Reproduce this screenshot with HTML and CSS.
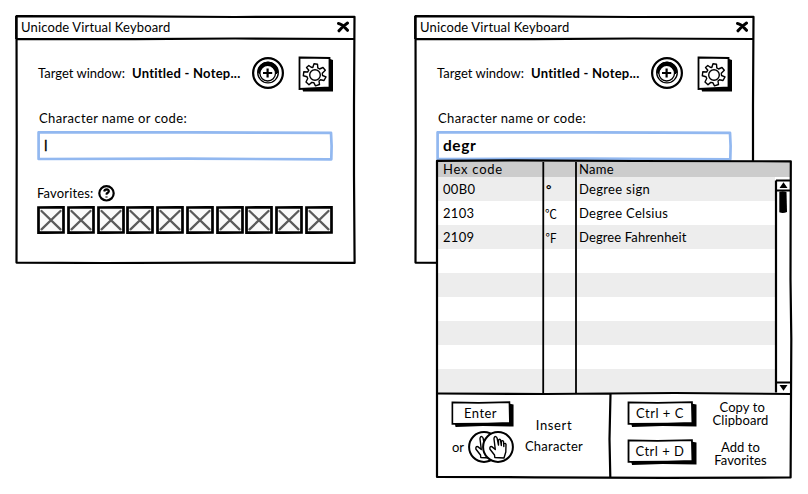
FILE: index.html
```
<!DOCTYPE html>
<html lang="en">
<head>
<meta charset="utf-8">
<title>Unicode Virtual Keyboard</title>
<link rel="stylesheet" href="styles.css">
</head>
<body>
<svg class="defs" aria-hidden="true">
  <symbol id="frame" viewBox="0 0 341 249">
    <path class="ink" d="M1.500 1.200L120 1.300 220 2 339.500 1.800 339 90 339 160 339.600 247.900 200 247.600 90 248 1.500 247.600 1.700 120Z M1.500 23.800L120 24.200 220 23.500 339 24"/>
    <path class="ink" d="M1.200 1V24"/>
  </symbol>
  <symbol id="close" viewBox="0 0 12 12">
    <path class="fat" d="M1.500 2.500Q5 3 10.500 9.300M10.500 2Q6 5 2 9.800"/>
  </symbol>
  <symbol id="target" viewBox="0 0 32 32">
    <circle class="ink" cx="16" cy="16" r="14.900"/>
    <circle cx="16" cy="15.600" r="10.300" fill="#fff" stroke="#000" stroke-width="1.300"/>
    <path d="M6 15A10 10 0 0 1 26 15L24 17A8.500 8.500 0 0 0 7.500 17Z" stroke="#000"/>
    <circle cx="15.700" cy="16.200" r="7.800" fill="#fff" stroke="#000" stroke-width="1.300"/>
    <path class="ink" d="M15.600 11.500V20.500M11 16H20.200"/>
  </symbol>
  <symbol id="gear" viewBox="0 0 36 36">
    <path d="M4 31H32V3L35 4V35.500H5Z"/>
    <path d="M1.500 1.500L31.500 2 31.500 31.500 1.500 33Z" fill="#fff" stroke="#000" stroke-width="1.800"/>
    <path class="line" d="M13.200 11.300L14.800 11.500 16 7.800 19.500 8.300 19.800 11.900 21.500 13 25 11.500 27.300 14.300 24.300 17.300 24.500 19.500 28 20.800 26 24.500 22.500 23.800 21 25 21.500 28.500 17.500 29.800 15.800 26.700 13.800 26.400 11 28.800 8 26 9.700 22.500 9 20.800 5.300 19.800 5.800 15.800 9.600 16 10.800 14.200 8.500 11.500 10.800 9.500Z"/>
    <circle class="line" cx="17" cy="19" r="5.300"/>
  </symbol>
  <symbol id="help" viewBox="0 0 17 17">
    <circle class="ink" cx="8.500" cy="8.300" r="7.200"/>
    <path class="ink" d="M6.200 6.500Q6.500 4.400 8.700 4.400Q11 4.600 10.800 6.400Q10.500 7.500 8.700 8.500V9.800M8.500 11.400V12.600"/>
  </symbol>
  <symbol id="slot" viewBox="0 0 28 28">
    <path d="M1.500 1.500L26.500 1.300 26.500 26.500 1.500 26.700Z" fill="#fafafa" stroke="#000" stroke-width="2.700"/>
    <path d="M4.500 5L23.500 23.300M23.500 5L4.500 23.300" fill="none" stroke="#5b5b5b" stroke-width="2.300" stroke-linecap="round"/>
  </symbol>
  <symbol id="field" viewBox="0 0 296 30">
    <path d="M1.600 1.300L150 1.300 294 1.900 294.600 15 294.300 28.300 150 27.700 1.600 28Z" fill="#fff" stroke="#92b8f0" stroke-width="2.700" stroke-linejoin="round"/>
  </symbol>
  <symbol id="key" viewBox="0 0 69 26" preserveAspectRatio="none">
    <path d="M4 22L63 22 63 2.500 68.500 3.500V25.500L35 25 5 26Z"/>
    <path d="M1.500 1.300L30 1.900 64 1.200 64.500 22 40 22.600 1.500 22.800Z" fill="#fff" stroke="#000" stroke-width="1.800"/>
  </symbol>
  <symbol id="hand" viewBox="0 0 32 32">
    <circle cx="16" cy="16" r="14.900" fill="#fff" stroke="#000" stroke-width="2"/>
    <path class="line" d="M12.800 26.500L12.500 24 8 18.300Q7.200 15.300 9.800 15.600L13.300 18.500 12 8Q12 5.300 13.800 5.600Q15 6 15.300 8L16.500 14V9.500Q17 7.500 18.500 8.800L19.300 14.500V10.300Q20.300 8.800 21.500 10.500L21.800 15.500V12.800Q23.500 11.600 24 13.500L23.800 21 22 27Z"/>
  </symbol>
</svg>

<main class="stage">
  <section class="window">
    <svg class="frame"><use href="#frame"/></svg>
    <header class="titlebar"><span class="title">Unicode Virtual Keyboard</span><svg class="close"><use href="#close"/></svg></header>
    <div class="body">
      <div class="target-row">
        <span class="target-label">Target window:</span><b class="target-name">Untitled - Notep...</b>
        <svg class="target"><use href="#target"/></svg><svg class="gear"><use href="#gear"/></svg>
      </div>
      <div class="name-label">Character name or code:</div>
      <div class="field"><svg class="field-box"><use href="#field"/></svg><span class="caret">l</span></div>
      <div class="fav-row"><span class="fav-label">Favorites:</span><svg class="help"><use href="#help"/></svg></div>
      <div class="slots">
        <svg><use href="#slot"/></svg><svg><use href="#slot"/></svg><svg><use href="#slot"/></svg><svg><use href="#slot"/></svg><svg><use href="#slot"/></svg><svg><use href="#slot"/></svg><svg><use href="#slot"/></svg><svg><use href="#slot"/></svg><svg><use href="#slot"/></svg><svg><use href="#slot"/></svg>
      </div>
    </div>
  </section>

  <section class="window">
    <svg class="frame"><use href="#frame"/></svg>
    <header class="titlebar"><span class="title">Unicode Virtual Keyboard</span><svg class="close"><use href="#close"/></svg></header>
    <div class="body">
      <div class="target-row">
        <span class="target-label">Target window:</span><b class="target-name">Untitled - Notep...</b>
        <svg class="target"><use href="#target"/></svg><svg class="gear"><use href="#gear"/></svg>
      </div>
      <div class="name-label">Character name or code:</div>
      <div class="field"><svg class="field-box"><use href="#field"/></svg><b class="query">degr</b></div>
    </div>

    <div class="popup">
      <svg class="popup-frame" viewBox="0 0 358 320">
        <path class="ink" d="M2 1.800L80 1.300 200 2 355.800 2.300 355.500 120 356.300 180 355.600 318.500 230 318.800 100 318.300 2 318Z"/>
        <path class="ink" d="M2 234.500L110 235 240 234 356 235M175.500 235L174.500 280 175.300 318"/>
        <path class="divider" d="M108.300 3L108.200 234M141 3V234"/>
        <path class="ink" d="M341 21.500L341 233.500M341 21.500H355M341 31.500H355M341 223.500H355"/>
        <path d="M344.500 29L348.500 23.300 352.500 29ZM344.500 226H352.500L348.500 231.700Z"/>
        <path d="M344.300 32.800Q348 31.500 351.500 33L352 53Q348 54.800 344.300 53.300Z"/>
      </svg>
      <div class="results">
        <div class="row head"><span class="wide">Hex code</span><span></span><span class="name">Name</span></div>
        <div class="row"><span>00B0</span><b class="degree">°</b><span class="name">Degree sign</span></div>
        <div class="row"><span>2103</span><span class="glyph">℃</span><span class="name">Degree Celsius</span></div>
        <div class="row"><span>2109</span><span class="glyph">℉</span><span class="name snug">Degree Fahrenheit</span></div>
        <div class="row"></div><div class="row"></div><div class="row"></div><div class="row"></div><div class="row"></div><div class="row"></div>
      </div>
      <footer class="hints">
        <div class="insert">
          <div class="triggers">
            <div class="key enter"><svg><use href="#key"/></svg><span>Enter</span></div>
            <div class="click"><span>or</span><svg><use href="#hand"/></svg><svg><use href="#hand"/></svg></div>
          </div>
          <div class="insert-text"><span class="insert-word">Insert</span><span>Character</span></div>
        </div>
        <div class="shortcuts">
          <div class="shortcut"><div class="key"><svg><use href="#key"/></svg><span>Ctrl + C</span></div><div class="action">&nbsp;Copy to<br>Clipboard</div></div>
          <div class="shortcut"><div class="key"><svg><use href="#key"/></svg><span>Ctrl + D</span></div><div class="action">Add to<br>Favorites</div></div>
        </div>
      </footer>
    </div>
  </section>
</main>
</body>
</html>
```
FILE: styles.css
```
* { box-sizing: border-box; }
body { margin: 0; background: #fff; color: #000; font: 13px/16px Lato, "Open Sans", sans-serif; }
svg { display: block; overflow: visible; flex: none; }
.defs { position: absolute; width: 0; height: 0; }
.ink { fill: none; stroke: #000; stroke-width: 2.2; stroke-linejoin: round; }
.line { fill: none; stroke: #000; stroke-width: 1.4; stroke-linejoin: round; }
.divider { fill: none; stroke: #000; stroke-width: 1.8; }
.fat { fill: none; stroke: #000; stroke-width: 3; stroke-linecap: round; }
.stage { display: flex; gap: 58px; width: 808px; height: 494px; padding: 15px; overflow: hidden; align-items: flex-start; }
.window { position: relative; width: 341px; height: 249px; flex: none; white-space: nowrap; }
.frame { position: absolute; inset: 0; width: 341px; height: 249px; }
.titlebar { height: 24px; display: flex; align-items: center; justify-content: space-between; padding: 0 7px 0 6px; }
.close { width: 12px; height: 12px; }
.title { letter-spacing: .14px; }
.body { padding: 16px 22px 0; }
.target-row { display: flex; align-items: center; height: 36px; }
.target-label { width: 95px; padding-left: 1px; }
.target-name { width: 120px; letter-spacing: .24px; }
.target { width: 32px; height: 32px; }
.gear { width: 36px; height: 36px; margin: 2px 0 0 14px; }
.name-label { margin: 19px 0 5px 2px; letter-spacing: .37px; }
.field { position: relative; width: 296px; height: 30px; padding: 6px 7px; }
.field-box { position: absolute; inset: 0; width: 296px; height: 30px; }
.field b, .caret { position: relative; }
.caret { font-size: 15px; -webkit-text-stroke: .3px #000; }
.query { font-size: 15.5px; letter-spacing: .55px; }
.fav-row { display: flex; align-items: center; gap: 5px; margin-top: 22px; height: 20px; }
.fav-label { letter-spacing: .15px; }
.help { width: 17px; height: 17px; }
.slots { display: flex; justify-content: space-between; width: 296px; margin-top: 3px; }
.slots svg { width: 28px; height: 28px; }
.popup { position: absolute; left: 21px; top: 144px; width: 358px; height: 320px; background: linear-gradient(#fff, #fff) 2px 2px / 354px 316px no-repeat; padding: 2px; }
.popup-frame { position: absolute; inset: 0; width: 358px; height: 320px; }
.results { width: 353px; }
.row { display: grid; grid-template-columns: 107px 32px 1fr; height: 24px; align-items: center; letter-spacing: .3px; }
.row span, .row b { padding-left: 6px; }
.row .name { padding-left: 3px; }
.row .snug { letter-spacing: .12px; }
.row .wide { letter-spacing: .75px; }
.row:nth-child(even) { background: #ededed; }
.row:nth-child(n+2) { width: 338px; }
.row.head { height: 16px; background: #ccc; }
.row .glyph { padding-left: 1px; padding-top: 2px; font-family: "Noto Sans CJK JP", "DejaVu Sans", sans-serif; font-size: 12px; }
.row .degree { padding-left: 2px; }
.hints { display: flex; height: 83px; }
.insert { display: flex; width: 173px; padding: 8px 0 0 14px; }
.triggers { width: 67px; }
.key { position: relative; width: 70px; height: 26px; text-align: center; padding: 4px 4px 0 0; letter-spacing: .5px; }
.key svg { position: absolute; inset: 0; width: 100%; height: 100%; }
.key span { position: relative; }
.enter { width: 63px; }
.click { display: flex; align-items: center; margin-top: 4px; padding-left: 1px; }
.click span { width: 16px; }
.click svg { width: 32px; height: 32px; }
.click svg + svg { margin-left: -18.5px; }
.insert-text { display: flex; flex-direction: column; align-items: center; gap: 5px; width: 72px; padding-top: 16px; letter-spacing: .25px; }
.insert-word { letter-spacing: .65px; }
.shortcuts { padding: 8px 0 0 17px; }
.shortcut { display: flex; height: 38px; }
.action { text-align: center; width: 76px; margin-left: 5.5px; line-height: 13px; letter-spacing: .1px; }
.shortcut + .shortcut .action { padding-top: 2px; }
```
